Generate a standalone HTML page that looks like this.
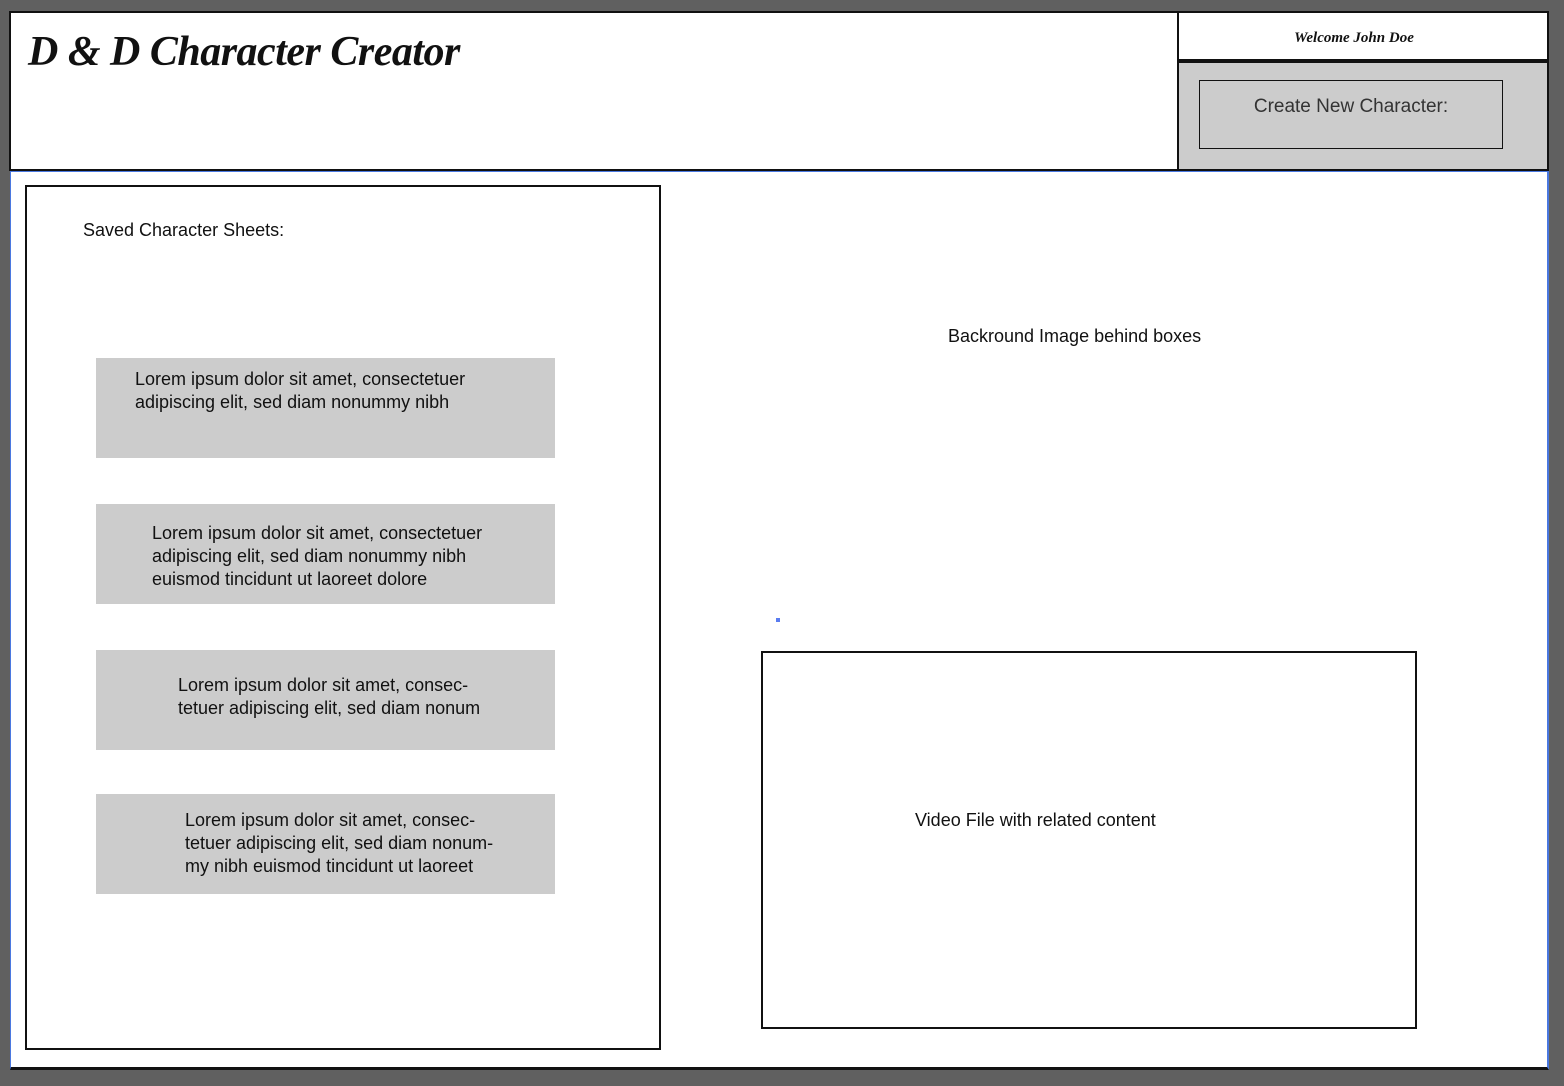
<!DOCTYPE html>
<html><head><meta charset="utf-8"><style>
body{margin:0;width:1564px;height:1086px;background:#606060;position:relative;overflow:hidden;font-family:"Liberation Sans",sans-serif;color:#111}
div{position:absolute;box-sizing:border-box}
.g{background:#cccccc;left:96px;width:459px;height:100px;font-size:18px;line-height:23px}
.g span{position:absolute}
</style></head><body>
<div style="left:10px;top:171px;width:1539px;height:899px;background:#fff;border-bottom:3px solid #111;border-right:2px solid #4a78e0;border-left:1px solid #4a78e0;border-top:1px solid #4a78e0"></div>
<div style="left:9px;top:11px;width:1540px;height:160px;background:#fff;border:2px solid #111"></div>
<div style="left:28px;top:28px;font-family:'Liberation Serif',serif;font-style:italic;font-weight:bold;font-size:42px;letter-spacing:-0.5px">D &amp; D Character Creator</div>
<div style="left:1177px;top:11px;width:372px;height:160px;border:2px solid #111;background:#ccc"></div>
<div style="left:1177px;top:11px;width:372px;height:52px;border:2px solid #111;border-bottom:4px solid #111;background:#fff"></div>
<div style="left:1179px;top:30px;width:350px;text-align:center;font-family:'Liberation Serif',serif;font-style:italic;font-weight:bold;font-size:15px">Welcome John Doe</div>
<div style="left:1199px;top:80px;width:304px;height:69px;border:1px solid #111;background:#ccc;text-align:center;padding-top:15px;font-size:19px;color:#333">Create New Character:</div>
<div style="left:25px;top:185px;width:636px;height:865px;border:2px solid #111"></div>
<div style="left:83px;top:220px;font-size:18px">Saved Character Sheets:</div>
<div class="g" style="top:358px"><span style="left:39px;top:10px">Lorem ipsum dolor sit amet, consectetuer<br>adipiscing elit, sed diam nonummy nibh</span></div>
<div class="g" style="top:504px"><span style="left:56px;top:18px">Lorem ipsum dolor sit amet, consectetuer<br>adipiscing elit, sed diam nonummy nibh<br>euismod tincidunt ut laoreet dolore</span></div>
<div class="g" style="top:650px"><span style="left:82px;top:24px">Lorem ipsum dolor sit amet, consec-<br>tetuer adipiscing elit, sed diam nonum</span></div>
<div class="g" style="top:794px"><span style="left:89px;top:15px">Lorem ipsum dolor sit amet, consec-<br>tetuer adipiscing elit, sed diam nonum-<br>my nibh euismod tincidunt ut laoreet</span></div>
<div style="left:948px;top:326px;font-size:18px">Backround Image behind boxes</div>
<div style="left:776px;top:618px;width:4px;height:4px;background:#5a7cf0"></div>
<div style="left:761px;top:651px;width:656px;height:378px;border:2px solid #111"></div>
<div style="left:915px;top:810px;font-size:18px">Video File with related content</div>
</body></html>
